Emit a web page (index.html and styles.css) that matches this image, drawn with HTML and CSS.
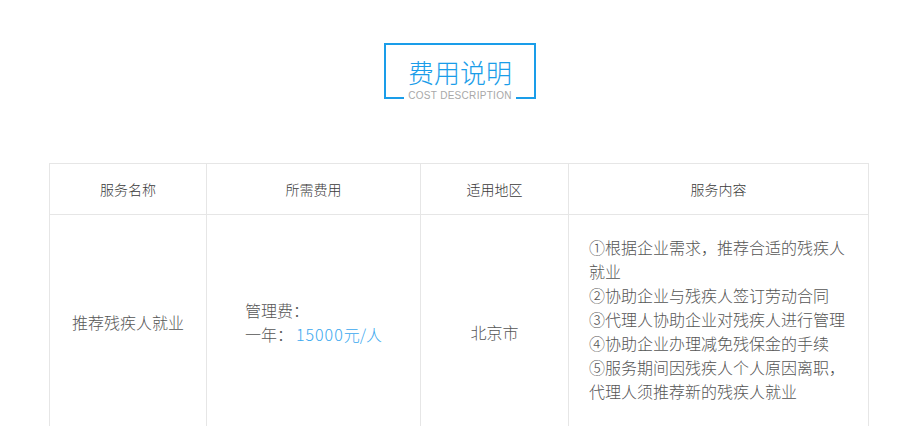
FILE: index.html
```html
<!DOCTYPE html>
<html lang="zh-CN">
<head>
    <meta charset="UTF-8">
    <meta name="viewport" content="width=device-width, initial-scale=1.0">
    <title>费用说明</title>
    <link rel="stylesheet" href="styles.css">
</head>
<body>
    <section class="cost">
        <div class="cost-title">
            <h2>费用说明</h2>
            <div class="cost-sub">
                <span class="line"></span>
                <span class="sub-text">COST DESCRIPTION</span>
                <span class="line"></span>
            </div>
        </div>

        <table class="cost-table">
            <colgroup>
                <col class="c1">
                <col class="c2">
                <col class="c3">
                <col class="c4">
            </colgroup>
            <thead>
                <tr>
                    <th>服务名称</th>
                    <th>所需费用</th>
                    <th>适用地区</th>
                    <th>服务内容</th>
                </tr>
            </thead>
            <tbody>
                <tr>
                    <td>推荐残疾人就业</td>
                    <td>
                        <div class="fee">
                            管理费：<br>
                            一年：<span class="price"><span class="num">15000</span>元/人</span>
                        </div>
                    </td>
                    <td class="area">北京市</td>
                    <td class="content">
                        ①根据企业需求，推荐合适的残疾人就业<br>
                        ②协助企业与残疾人签订劳动合同<br>
                        ③代理人协助企业对残疾人进行管理<br>
                        ④协助企业办理减免残保金的手续<br>
                        ⑤服务期间因残疾人个人原因离职，代理人须推荐新的残疾人就业
                    </td>
                </tr>
            </tbody>
        </table>
    </section>
</body>
</html>
```

FILE: styles.css
```css
body {
    margin: 0;
    padding: 0;
    background: #ffffff;
    font-family: "Noto Sans CJK SC", "Noto Sans", sans-serif;
    color: #555555;
}
.cost {
    padding-top: 43px;
}
.cost-title {
    width: 148px;
    margin: 0 auto;
    border: 2px solid #1a9de9;
    border-bottom: none;
    text-align: center;
}
.cost-title h2 {
    margin: 0;
    padding-top: 13px;
    font-size: 26px;
    line-height: 28px;
    font-weight: 300;
    color: #1a9de9;
}
.cost-sub {
    display: flex;
    align-items: flex-end;
    height: 13px;
}
.cost-sub .line {
    flex: 1;
    border-bottom: 2px solid #1a9de9;
}
.sub-text {
    padding: 0 4px;
    font-family: "Liberation Sans", Arial, sans-serif;
    font-size: 10px;
    line-height: 10px;
    letter-spacing: 0.3px;
    color: #a8a8a8;
    white-space: nowrap;
    position: relative;
    top: 2px;
}
.cost-table {
    width: 820px;
    margin: 64px 0 0 49px;
    border-collapse: collapse;
    table-layout: fixed;
}
.cost-table col.c1 { width: 157px; }
.cost-table col.c2 { width: 214px; }
.cost-table col.c3 { width: 148px; }
.cost-table col.c4 { width: 300px; }
.cost-table th,
.cost-table td {
    border: 1px solid #e6e6e6;
    text-align: center;
    vertical-align: middle;
}
.cost-table th {
    height: 50px;
    padding: 0;
    font-size: 14px;
    font-weight: 300;
    color: #3a3a3a;
}
.cost-table td {
    padding: 0;
    font-size: 16px;
    line-height: 24px;
    font-weight: 300;
    color: #555555;
}
.fee {
    display: inline-block;
    text-align: left;
}
.price {
    color: #3aa8ef;
}
.price .num {
    letter-spacing: 1px;
    margin-left: 3px;
}
.area {
    padding-top: 20px !important;
}
.content {
    text-align: left !important;
    padding: 20px 20px 26px 20px !important;
}
```
